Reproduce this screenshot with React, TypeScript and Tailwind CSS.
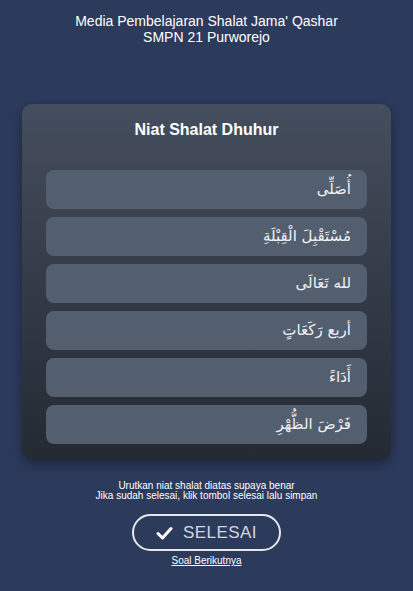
import React from "react";

const items = [
  "أُصَلِّى",
  "مُسْتَقْبِلَ الْقِبْلَةِ",
  "لله تَعَالَى",
  "أربع رَكَعَاتٍ",
  "أَدَاءً",
  "فَرْضَ الظُّهْرِ",
];

export default function App() {
  return (
    <div className="min-h-[591px] bg-[#2c3a5c] font-['Liberation_Sans',Arial,sans-serif] text-white">
      <div className="pt-[13px] text-center text-[14px] leading-[16px]">
        <p>Media Pembelajaran Shalat Jama&apos; Qashar</p>
        <p>SMPN 21 Purworejo</p>
      </div>

      <div className="mx-[22px] mt-[59px] rounded-[10px] bg-gradient-to-b from-[#454e5e] to-[#242a33] px-[24px] pb-[16px] pt-[16px] shadow-[0_4px_12px_rgba(0,0,0,0.35)]">
        <h2 className="text-center text-[16px] font-bold leading-[20px]">
          Niat Shalat Dhuhur
        </h2>
        <div className="mt-[30px] flex flex-col gap-[8px]">
          {items.map((t, i) => (
            <div
              key={i}
              dir="rtl"
              className="flex h-[39px] items-center rounded-[8px] bg-[#535e6f] px-[16px] font-['DejaVu_Sans',sans-serif] text-[15px] text-[#eef2f7]"
            >
              {t}
            </div>
          ))}
        </div>
      </div>

      <div className="mt-[21px] text-center text-[10px] leading-[10px]">
        <p>Urutkan niat shalat diatas supaya benar</p>
        <p>Jika sudah selesai, klik tombol selesai lalu simpan</p>
      </div>

      <div className="mt-[13px] flex justify-center">
        <button className="flex h-[37px] w-[149px] items-center justify-center gap-[10px] rounded-full border-2 border-[#e5e7eb] text-[17px] tracking-wide text-[#d3d7de]">
          <svg width="17" height="14" viewBox="0 0 17 14" fill="none">
            <path d="M2 7.5l4.5 4.5L15 2.5" stroke="#ffffff" strokeWidth="3" strokeLinecap="round" strokeLinejoin="round" />
          </svg>
          SELESAI
        </button>
      </div>

      <div className="mt-[2px] text-center text-[10px]">
        <a className="underline">Soal Berikutnya</a>
      </div>
    </div>
  );
}
